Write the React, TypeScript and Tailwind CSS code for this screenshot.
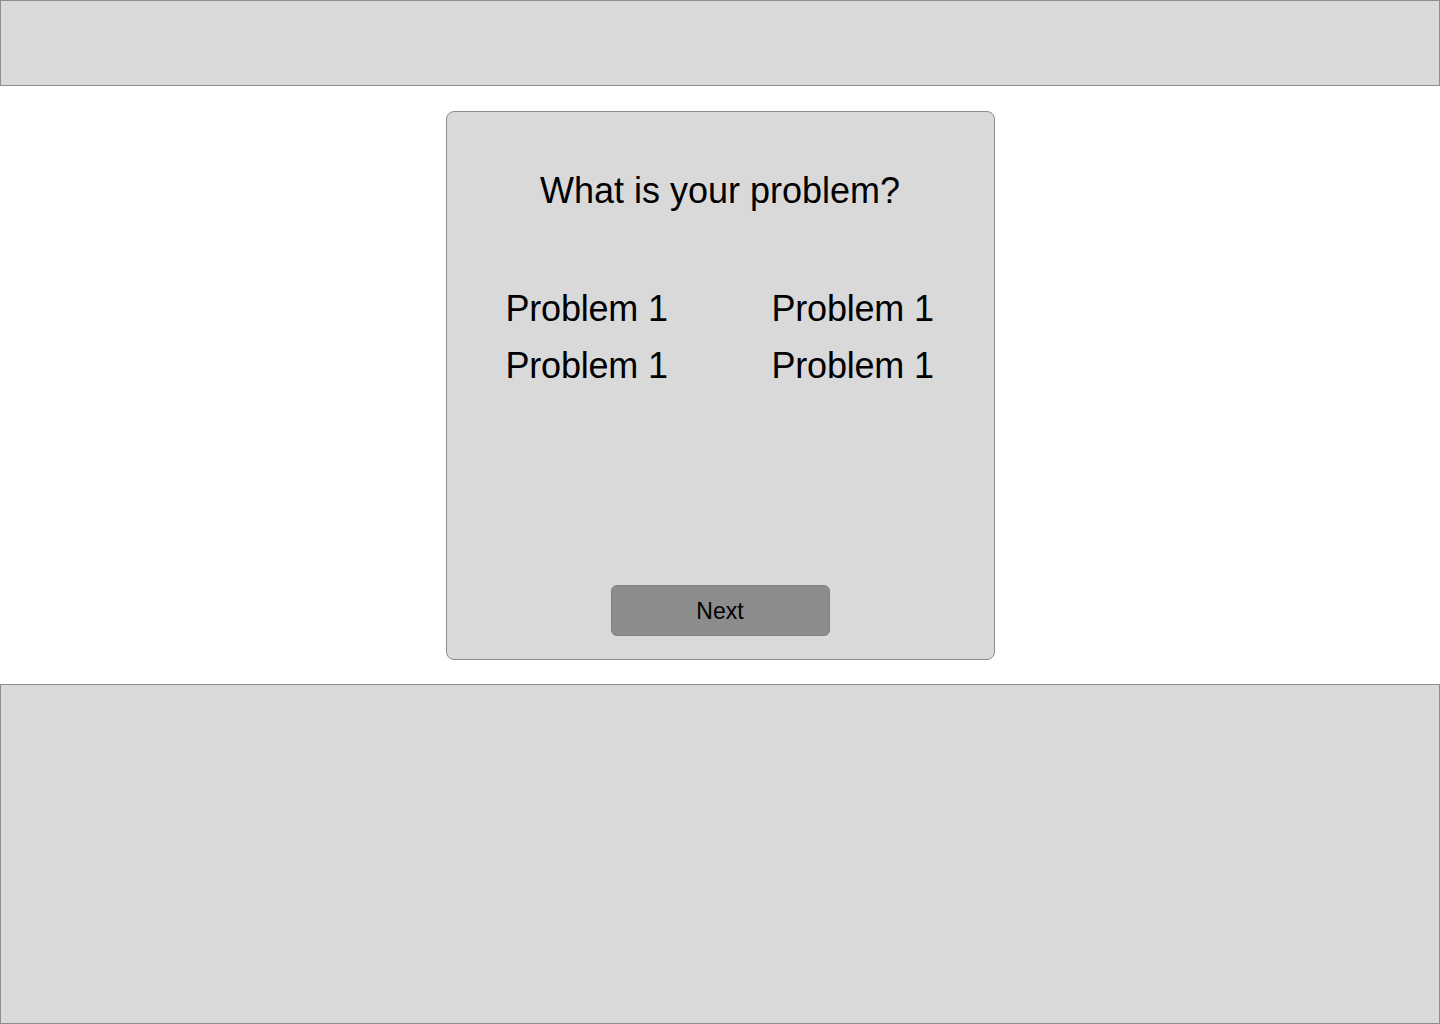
export default function App() {
  const problems = ['Problem 1', 'Problem 1', 'Problem 1', 'Problem 1']

  return (
    <div className="min-h-screen w-[1440px] bg-white flex flex-col" style={{ fontFamily: '"Liberation Sans", Arial, sans-serif' }}>
      {/* Header bar */}
      <div className="h-[86px] shrink-0 bg-[#d9d9d9] border border-[#8e8e8e]" />

      {/* Question card */}
      <div className="flex justify-center pt-[25px] pb-[24px]">
        <div className="w-[549px] h-[549px] bg-[#d9d9d9] border border-[#8e8e8e] rounded-[8px] flex flex-col">
          <h1 className="pt-[59px] text-center text-[36px] leading-[40px] text-black font-normal">What is your problem?</h1>

          <div className="mt-[69px] pl-[59px] grid grid-cols-[266px_auto]">
            {problems.map((p, i) => (
              <div key={i} className="text-[36px] leading-[57px] text-black tracking-[-0.2px]">{p}</div>
            ))}
          </div>

          <div className="mt-auto pb-[23px] flex justify-center">
            <button className="w-[219px] h-[51px] pt-[2px] bg-[#8c8c8c] border border-[#818181] rounded-[6px] text-[23px] text-black">
              Next
            </button>
          </div>
        </div>
      </div>

      {/* Footer panel */}
      <div className="h-[340px] shrink-0 bg-[#d9d9d9] border border-[#8e8e8e]" />
    </div>
  )
}
